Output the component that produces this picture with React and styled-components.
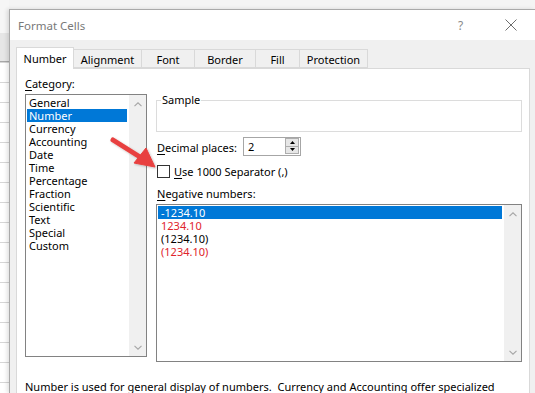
import React from 'react';
import styled, { createGlobalStyle } from 'styled-components';

const FONT = '"Noto Sans", "Open Sans", sans-serif';

const Global = createGlobalStyle`
  html, body { margin: 0; padding: 0; }
  body { width: 535px; height: 393px; overflow: hidden; background: #f3f3f3; font-family: ${FONT}; }
  * { box-sizing: border-box; }
`;

const Page = styled.div`
  position: relative;
  display: flex;
  width: 535px;
  height: 393px;
  overflow: hidden;
  background: #f4f4f4;
  font-family: ${FONT};
  font-size: 11px;
  color: #000;
`;

const Sheet = styled.div`
  width: 9px;
  flex: none;
  display: flex;
  flex-direction: column;
`;
const SheetTop = styled.div`
  height: 33px;
  background: #f6f6f6;
`;
const SheetHeader = styled.div`
  height: 29px;
  background: #e6e6e6;
  border-bottom: 1px solid #a8a8a8;
`;
const SheetCells = styled.div`
  flex: 1;
  background-color: #fff;
  background-image: linear-gradient(to bottom, transparent 19px, #d6d6d6 19px);
  background-size: 100% 20px;
  background-position: 0 1px;
`;

const Dialog = styled.div`
  flex: 1;
  margin-top: 9px;
  border-top: 1px solid #a9a9a9;
  border-left: 1px solid #a9a9a9;
  background: #f0f0f0;
  box-shadow: -2px 0 4px rgba(0, 0, 0, 0.12);
  display: flex;
  flex-direction: column;
  min-width: 0;
`;

const TitleBar = styled.div`
  height: 30px;
  flex: none;
  background: #fff;
  display: flex;
  align-items: center;
  padding-left: 8px;
`;
const Title = styled.div`
  flex: 1;
  color: #787878;
  font-size: 11.5px;
`;
const Help = styled.div`
  width: 20px;
  color: #8a8a8a;
  font-size: 12px;
  margin-right: 27px;
`;
const CloseBtn = styled.div`
  width: 30px;
  display: flex;
  align-items: center;
`;

const Body = styled.div`
  flex: 1;
  padding: 7px 0 0 6px;
  display: flex;
  flex-direction: column;
`;

const TabBar = styled.div`
  display: flex;
  align-items: flex-end;
  height: 21px;
  flex: none;
  position: relative;
  z-index: 1;
`;
const Tab = styled.div`
  width: ${(p) => p.$w}px;
  height: ${(p) => (p.$active ? 22 : 19)}px;
  margin-bottom: ${(p) => (p.$active ? -1 : 0)}px;
  margin-left: -1px;
  background: ${(p) => (p.$active ? '#fff' : '#f0f0f0')};
  border: 1px solid #d9d9d9;
  border-bottom: ${(p) => (p.$active ? 'none' : '1px solid #d9d9d9')};
  display: flex;
  align-items: center;
  justify-content: center;
  font-size: 11px;
  color: #000;
  padding-top: ${(p) => (p.$active ? 0 : 1)}px;
  &:first-child { margin-left: 0; }
`;

const Panel = styled.div`
  flex: 1;
  background: #fff;
  border: 1px solid #d9d9d9;
  padding: 7px 0 0 8px;
  display: flex;
  flex-direction: column;
  margin-right: -1px;
  width: 514px;
`;

const Columns = styled.div`
  display: flex;
`;

const LeftCol = styled.div`
  width: 122px;
  display: flex;
  flex-direction: column;
`;

const RightCol = styled.div`
  width: 366px;
  margin-left: 9px;
  display: flex;
  flex-direction: column;
`;

const Label = styled.div`
  height: 16px;
  line-height: 16px;
  white-space: nowrap;
  padding-left: ${(p) => p.$indent || 0}px;
  margin-top: ${(p) => p.$mt || 0}px;
`;

const U = styled.span`
  text-decoration: underline;
  text-underline-offset: 2px;
`;

const ListBox = styled.div`
  height: ${(p) => p.$h}px;
  margin-top: 2px;
  border: 1px solid #828282;
  display: flex;
  background: #fff;
`;
const Items = styled.div`
  flex: 1;
  padding: 1px 2px 0 1px;
`;
const Item = styled.div`
  height: 13px;
  line-height: 13px;
  padding-left: ${(p) => p.$pad}px;
  background: ${(p) => (p.$sel ? '#0078d7' : 'transparent')};
  color: ${(p) => (p.$sel ? '#fff' : p.$red ? '#e0242b' : '#000')};
  white-space: nowrap;
`;
const Scroll = styled.div`
  width: 17px;
  flex: none;
  background: #f0f0f0;
  display: flex;
  flex-direction: column;
  justify-content: space-between;
  align-items: center;
  padding: 7px 0 6px;
`;

const Chevron = ({ down }) => (
  <svg width="8" height="5" viewBox="0 0 8 5">
    <path
      d={down ? 'M0.5 0.8 L4 4.2 L7.5 0.8' : 'M0.5 4.2 L4 0.8 L7.5 4.2'}
      fill="none"
      stroke="#a6a6a6"
      strokeWidth="1.1"
    />
  </svg>
);

const Group = styled.fieldset`
  margin: 17px 0 0;
  padding: 0 4px;
  height: 39px;
  border: 1px solid #dcdcdc;
  min-width: 0;
`;
const Legend = styled.legend`
  padding: 0 1px;
  font-size: 11px;
  line-height: 14px;
  color: #000;
`;

const Row = styled.div`
  display: flex;
  align-items: center;
  margin-top: ${(p) => p.$mt}px;
`;
const RowLabel = styled.div`
  width: 87px;
  padding-left: 1px;
  padding-top: 2px;
  white-space: nowrap;
`;
const SpinInput = styled.div`
  width: 58px;
  height: 19px;
  border: 1px solid #a6a6a6;
  display: flex;
  background: #fff;
`;
const SpinValue = styled.div`
  flex: 1;
  padding-left: 4px;
  line-height: 17px;
`;
const SpinButtons = styled.div`
  width: 15px;
  display: flex;
  flex-direction: column;
  padding: 0 1px 1px 0;
`;
const SpinBtn = styled.div`
  flex: 1;
  background: #e6e6e6;
  border: 1px solid #adadad;
  margin-top: ${(p) => (p.$down ? -1 : 0)}px;
  display: flex;
  align-items: center;
  justify-content: center;
`;

const Check = styled.div`
  width: 13px;
  height: 13px;
  border: 1px solid #333;
  background: #fff;
  flex: none;
  margin-left: 1px;
`;
const CheckText = styled.div`
  margin-left: 4px;
  white-space: nowrap;
`;

const Description = styled.div`
  margin-top: 17px;
  line-height: 16px;
  white-space: nowrap;
`;

const ArrowSvg = styled.svg`
  position: absolute;
  left: 0;
  top: 0;
  pointer-events: none;
`;

const tabs = [
  ['Number', 58],
  ['Alignment', 69],
  ['Font', 54],
  ['Border', 62],
  ['Fill', 45],
  ['Protection', 69],
];

const categories = [
  'General',
  'Number',
  'Currency',
  'Accounting',
  'Date',
  'Time',
  'Percentage',
  'Fraction',
  'Scientific',
  'Text',
  'Special',
  'Custom',
];

const negatives = [
  ['-1234.10', false],
  ['1234.10', true],
  ['(1234.10)', false],
  ['(1234.10)', true],
];

export default function App() {
  return (
    <Page>
      <Global />
      <Sheet>
        <SheetTop />
        <SheetHeader />
        <SheetCells />
      </Sheet>
      <Dialog>
        <TitleBar>
          <Title>Format Cells</Title>
          <Help>?</Help>
          <CloseBtn>
            <svg width="12" height="12" viewBox="0 0 12 12">
              <path d="M0.5 0.5 L11.5 11.5 M11.5 0.5 L0.5 11.5" stroke="#6d6d6d" strokeWidth="1" />
            </svg>
          </CloseBtn>
        </TitleBar>
        <Body>
          <TabBar>
            {tabs.map(([t, w], i) => (
              <Tab key={t} $w={w} $active={i === 0}>
                {t}
              </Tab>
            ))}
          </TabBar>
          <Panel>
            <Columns>
              <LeftCol>
                <Label>
                  <U>C</U>ategory:
                </Label>
                <ListBox $h={263}>
                  <Items>
                    {categories.map((c) => (
                      <Item key={c} $pad={2} $sel={c === 'Number'}>
                        {c}
                      </Item>
                    ))}
                  </Items>
                  <Scroll>
                    <Chevron />
                    <Chevron down />
                  </Scroll>
                </ListBox>
              </LeftCol>
              <RightCol>
                <Group>
                  <Legend>Sample</Legend>
                </Group>
                <Row $mt={5}>
                  <RowLabel>
                    <U>D</U>ecimal places:
                  </RowLabel>
                  <SpinInput>
                    <SpinValue>2</SpinValue>
                    <SpinButtons>
                      <SpinBtn>
                        <svg width="5" height="3" viewBox="0 0 5 3">
                          <path d="M2.5 0 L5 3 L0 3 Z" fill="#000" />
                        </svg>
                      </SpinBtn>
                      <SpinBtn $down>
                        <svg width="5" height="3" viewBox="0 0 5 3">
                          <path d="M0 0 L5 0 L2.5 3 Z" fill="#000" />
                        </svg>
                      </SpinBtn>
                    </SpinButtons>
                  </SpinInput>
                </Row>
                <Row $mt={8}>
                  <Check />
                  <CheckText>
                    <U>U</U>se 1000 Separator (,)
                  </CheckText>
                </Row>
                <Label $mt={7} $indent={1}>
                  <U>N</U>egative numbers:
                </Label>
                <ListBox $h={158}>
                  <Items>
                    {negatives.map(([n, red], i) => (
                      <Item key={i} $pad={3} $sel={i === 0} $red={red}>
                        {n}
                      </Item>
                    ))}
                  </Items>
                  <Scroll>
                    <Chevron />
                    <Chevron down />
                  </Scroll>
                </ListBox>
              </RightCol>
            </Columns>
            <Description>
              Number is used for general display of numbers.&nbsp; Currency and Accounting offer specialized
            </Description>
          </Panel>
        </Body>
      </Dialog>
      <ArrowSvg width="535" height="393" viewBox="0 0 535 393">
        <defs>
          <filter id="sh" x="-20%" y="-20%" width="140%" height="140%">
            <feDropShadow dx="1" dy="1" stdDeviation="1" floodColor="#000" floodOpacity="0.25" />
          </filter>
        </defs>
        <g filter="url(#sh)" fill="#e8413f" stroke="#e8413f">
          <line x1="113" y1="140" x2="140" y2="157" strokeWidth="5" strokeLinecap="round" />
          <path d="M155 167 L134 163 L146 148 Z" strokeWidth="1" strokeLinejoin="round" />
        </g>
      </ArrowSvg>
    </Page>
  );
}
